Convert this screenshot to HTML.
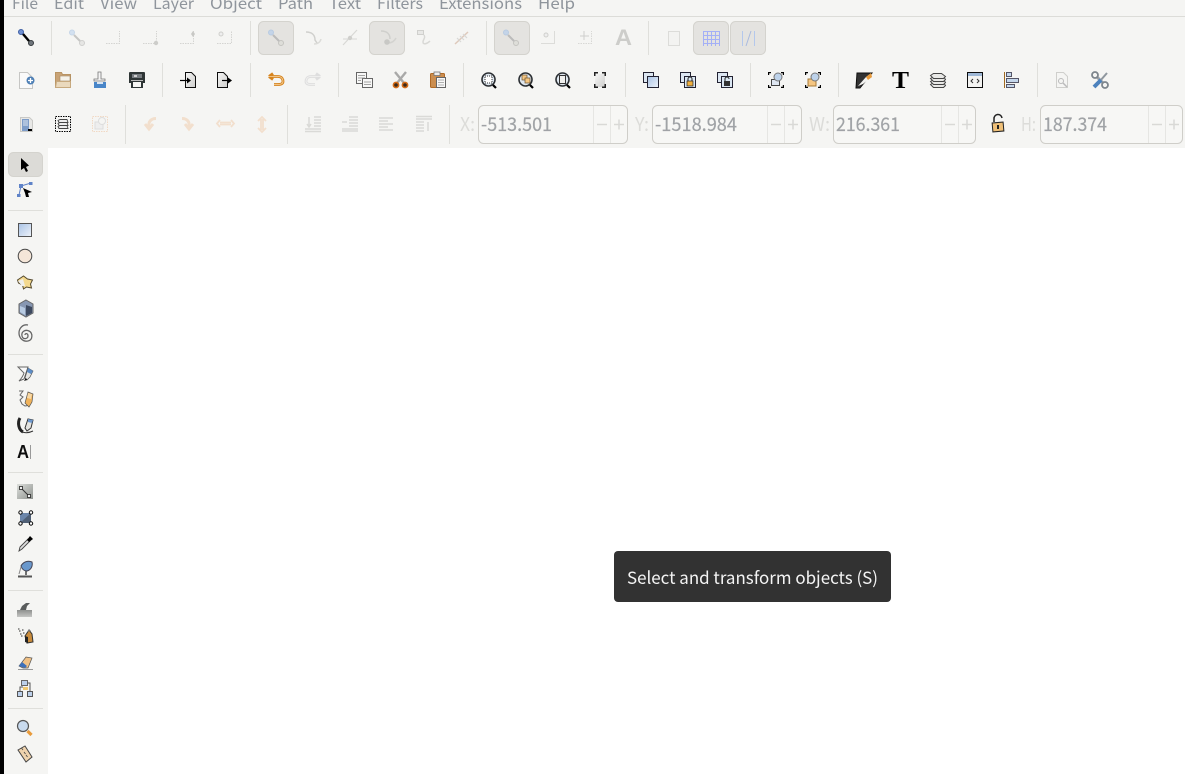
<!DOCTYPE html>
<html><head><meta charset="utf-8"><title>Inkscape</title>
<style>
html,body{margin:0;padding:0;background:#fff;width:1185px;height:774px;overflow:hidden}
svg{display:block;position:absolute;left:0;top:0}
text{font-family:"Noto Sans CJK JP","Liberation Sans",sans-serif}
</style></head><body>
<svg width="1185" height="774" viewBox="0 0 1185 774" xmlns="http://www.w3.org/2000/svg">
<defs>
<linearGradient id="bl" x1="0" y1="0" x2="1" y2="1"><stop offset="0" stop-color="#a9c3e6"/><stop offset="1" stop-color="#eef3f9"/></linearGradient>
<linearGradient id="gr" x1="0" y1="0" x2="1" y2="1"><stop offset="0" stop-color="#f5f5f4"/><stop offset="1" stop-color="#cfcfcd"/></linearGradient>
<linearGradient id="dg" x1="0" y1="0" x2="1" y2="1"><stop offset="0" stop-color="#dcdedb"/><stop offset="1" stop-color="#8f938f"/></linearGradient>
<linearGradient id="cal" x1="0" y1="0" x2="0" y2="1"><stop offset="0" stop-color="#8e908e"/><stop offset="1" stop-color="#c5c6c4"/></linearGradient>
<filter id="s" x="-5%" y="-5%" width="110%" height="110%"><feGaussianBlur stdDeviation=".25"/></filter>
</defs>
<rect width="1185" height="774" fill="#fff"/>
<rect x="4" width="1181" height="148" fill="#f5f5f3"/>
<rect x="4" width="44" height="774" fill="#f5f5f3"/>
<rect width="4" height="774" fill="#000"/>
<rect x="4" y="16" width="1181" height="1" fill="#dcdcd8"/>
<!-- menu -->
<g font-size="16" fill="#8f959c">
<text x="12" y="9" textLength="26" lengthAdjust="spacingAndGlyphs">File</text>
<text x="54" y="9" textLength="30" lengthAdjust="spacingAndGlyphs">Edit</text>
<text x="100" y="9" textLength="37" lengthAdjust="spacingAndGlyphs">View</text>
<text x="153" y="9" textLength="41" lengthAdjust="spacingAndGlyphs">Layer</text>
<text x="210" y="9" textLength="52" lengthAdjust="spacingAndGlyphs">Object</text>
<text x="278" y="9" textLength="35" lengthAdjust="spacingAndGlyphs">Path</text>
<text x="329" y="9" textLength="32" lengthAdjust="spacingAndGlyphs">Text</text>
<text x="377" y="9" textLength="46" lengthAdjust="spacingAndGlyphs">Filters</text>
<text x="439" y="9" textLength="83" lengthAdjust="spacingAndGlyphs">Extensions</text>
<text x="538" y="9" textLength="37" lengthAdjust="spacingAndGlyphs">Help</text>
</g>
<!-- separators -->
<g fill="#dfdfdb">
<rect x="51" y="21" width="1" height="34"/><rect x="250" y="21" width="1" height="34"/><rect x="486" y="21" width="1" height="34"/><rect x="648" y="21" width="1" height="34"/>
<rect x="162" y="63" width="1" height="34"/><rect x="250" y="63" width="1" height="34"/><rect x="338" y="63" width="1" height="34"/><rect x="463" y="63" width="1" height="34"/><rect x="625" y="63" width="1" height="34"/><rect x="750" y="63" width="1" height="34"/><rect x="838" y="63" width="1" height="34"/><rect x="1037" y="63" width="1" height="34"/>
<rect x="125" y="105" width="1" height="39"/><rect x="287" y="105" width="1" height="39"/><rect x="449" y="105" width="1" height="39"/>
<rect x="8" y="210" width="35" height="1"/><rect x="8" y="354" width="35" height="1"/><rect x="8" y="472" width="35" height="1"/><rect x="8" y="590" width="35" height="1"/><rect x="8" y="708" width="35" height="1"/>
</g>
<!-- pressed buttons -->
<g fill="#e4e3e0" stroke="#d4d3ce">
<rect x="258.5" y="21.5" width="35" height="33" rx="5"/>
<rect x="369.5" y="21.5" width="35" height="33" rx="5"/>
<rect x="494.5" y="21.5" width="35" height="33" rx="5"/>
<rect x="693.5" y="21.5" width="35" height="33" rx="5"/>
<rect x="730.5" y="21.5" width="35" height="33" rx="5"/>
<rect x="8.5" y="152.5" width="34" height="24" rx="5" fill="#dcdbd7"/>
</g>
<g filter="url(#s)">
<!-- ROW 1 -->
<circle cx="21" cy="32" r="2.5" fill="#6f90d2" stroke="#3e5fa5"/><circle cx="31" cy="43" r="2.5" fill="#70767c" stroke="#33373b"/><path d="M23 34L29 41" stroke="#000" stroke-width="2.4"/>
<circle cx="72" cy="32.500" r="2.500" fill="#d3e1f0" stroke="#c6d6e8"/><circle cx="82" cy="43" r="2.500" fill="#e6e6e4" stroke="#cfcfcd"/><path d="M74 35L80 41" stroke="#c6c6c4" stroke-width="2"/>
<path d="M106 43.500H119.500V31" fill="none" stroke="#d4d4d1" stroke-dasharray="1.500 1"/>
<path d="M143 43.500H156.500V31" fill="none" stroke="#d4d4d1" stroke-dasharray="1.500 1"/><circle cx="156" cy="43" r="2.200" fill="#cdcdca"/>
<path d="M180 43.500H193.500V31" fill="none" stroke="#d4d4d1" stroke-dasharray="1.500 1"/><path d="M193 31l2 3-2 3-2-3z" fill="#c8c8c5"/>
<path d="M217 43.500H231.500V31" fill="none" stroke="#d4d4d1" stroke-dasharray="1.500 1"/><circle cx="221" cy="34" r="2" fill="#eee" stroke="#cfcfcc"/>
<circle cx="271" cy="32.500" r="2.500" fill="#c4d4e8" stroke="#b8cbe2"/><circle cx="281" cy="43" r="2.500" fill="#deded9" stroke="#c4c4c0"/><path d="M273 35L279 41" stroke="#bbb" stroke-width="2"/>
<path d="M306 32c6 0 9 3 9 8l2 3" fill="none" stroke="#d0d0cd" stroke-width="1.500"/><path d="M314 44c3 0 6-1 7-5" fill="none" stroke="#dcdcd9" stroke-width="1.500"/>
<path d="M343 45L357 30" stroke="#d8d8d5" stroke-width="1.200"/><path d="M343 39h14" stroke="#d8d8d5"/><circle cx="350" cy="38" r="2.200" fill="#cfcfcc"/>
<path d="M381 31c6 0 9 3 9 8" fill="none" stroke="#cfcfcc" stroke-width="1.500"/><path d="M388 43c3 0 6-1 8-5" fill="none" stroke="#d3d3d0" stroke-width="1.500"/><circle cx="387" cy="42" r="2.800" fill="#c8c8c5"/>
<rect x="417.500" y="30.500" width="6" height="4" fill="#e8e8e6" stroke="#d0d0cd"/><path d="M424 35c2 3-1 4-1 7s4 2 7-1" fill="none" stroke="#d8d8d5" stroke-width="1.500"/>
<path d="M455 44L468 32" stroke="#dec9bb" stroke-width="1.500"/><path d="M457 38l4 4M463 34l4 4M460 36l4 4" stroke="#d8d8d5" stroke-width="1.200"/>
<circle cx="506" cy="32.500" r="2.500" fill="#c4d4e8" stroke="#b8cbe2"/><circle cx="516" cy="43" r="2.500" fill="#deded9" stroke="#c4c4c0"/><path d="M508 35L514 41" stroke="#bbb" stroke-width="2"/>
<path d="M541 43.500H554.500V31" fill="none" stroke="#dcdcd9"/><circle cx="546" cy="35" r="2" fill="#eee" stroke="#cfcfcc"/>
<path d="M578 43.500H591.500V31" fill="none" stroke="#d8d8d5" stroke-dasharray="1.500 1"/><path d="M580 36h9M584 31v9" stroke="#cfcfcc"/>
<text x="615" y="45" style="font-family:'Liberation Sans',sans-serif" font-size="22" font-weight="bold" fill="#cdcdca" textLength="17" lengthAdjust="spacingAndGlyphs">A</text>
<rect x="668.500" y="31.500" width="11" height="14" fill="#f3f3f1" stroke="#dcdcd9"/>
<path d="M703.500 31v15M707.500 31v15M711.500 31v15M715.500 31v15M719.500 31v15M703 31.500h17M703 35.500h17M703 39.500h17M703 43.500h17" stroke="#a4b0f6" fill="none"/>
<path d="M742.500 31v15M754.500 31v15" stroke="#b4c8ec" fill="none"/><path d="M746 46l5-15" stroke="#a9bade" fill="none"/>
<!-- ROW 2 -->
<path d="M19.500 72.500h8l5 5v11h-13z" fill="#fafafa" stroke="#c6c6c4"/><circle cx="30.500" cy="80.500" r="4" fill="#4e7fb5"/><path d="M28 80.500h5M30.500 78v5" stroke="#fff" stroke-width="1.300"/>
<path d="M55.500 72.500h6l1 2h8v13h-15z" fill="#c9a376" stroke="#b99463"/><rect x="60" y="76" width="10" height="5" fill="#f5f2ea" stroke="#a58a66" stroke-width=".6"/><path d="M55.500 87.500l1-6h14v6z" fill="#ead9bd" stroke="#c7a97e"/>
<path d="M98 72h3v7h4v2H94v-2h4z" fill="#f4f4f4" stroke="#777" stroke-width=".8"/><rect x="94" y="82" width="12" height="6" fill="#4a86c8"/><rect x="97" y="82" width="6" height="2" fill="#d9e6f4"/>
<path d="M130 72h14q1 0 1 1v10h-2v5h-12v-5h-2v-10q0-1 1-1z" fill="#2f3436"/><rect x="132" y="74" width="10" height="4" fill="#777c80"/><rect x="134" y="75" width="3" height="2" fill="#d0d0d0"/><rect x="131" y="80" width="12" height="1" fill="#bbb"/><rect x="133" y="82" width="8" height="5" fill="#f6f6f4"/>
<path d="M185.500 72.500h6l4 4v11h-10z" fill="url(#gr)" stroke="#111"/><path d="M180 80.500h9" stroke="#000" stroke-width="1.200"/><path d="M187 77.500l4 3-4 3z" fill="#000"/>
<path d="M217.500 72.500h6l4 4v11h-10z" fill="url(#gr)" stroke="#111"/><path d="M222 80.500h8" stroke="#000" stroke-width="1.200"/><path d="M228 77.500l4 3-4 3z" fill="#000"/>
<path d="M269 76.500h9c4 0 5 3 5 5s-2 3-5 3h-4M269 76.500l4-3M269 76.500l4 3" fill="none" stroke="#d6831c" stroke-width="2.800"/>
<path d="M269 76.500h9c4 0 5 3 5 5s-2 3-5 3h-4" fill="none" stroke="#f7d7a6" stroke-width=".8"/>
<path d="M320 76.500h-9c-4 0-5 3-5 5s2 3 5 3h4M320 76.500l-4-3M320 76.500l-4 3" fill="none" stroke="#dedede" stroke-width="2.800"/>
<path d="M320 76.500h-9c-4 0-5 3-5 5s2 3 5 3h4" fill="none" stroke="#f3f3f2" stroke-width=".8"/>
<rect x="356.500" y="72.500" width="10" height="11" fill="#f8f8f7" stroke="#666"/><rect x="362.500" y="78.500" width="10" height="9" fill="#f8f8f7" stroke="#666"/><path d="M358 75.500h7M358 78h7M358 80.500h3M364 82h7M364 84.500h7" stroke="#888" stroke-width=".8"/>
<path d="M395 72l9 11M406 72l-9 11" stroke="#a9a9a8" stroke-width="2.400"/><circle cx="396" cy="85" r="2.600" fill="#3a2a1a" stroke="#d46b12" stroke-width="1.600"/><circle cx="405" cy="85" r="2.600" fill="#3a2a1a" stroke="#d46b12" stroke-width="1.600"/>
<rect x="430.500" y="73.500" width="14" height="14" rx="1" fill="#cc8e50" stroke="#b06a28"/><rect x="434" y="72" width="6" height="3.500" fill="#eee" stroke="#777" stroke-width=".8"/><rect x="436.500" y="77.500" width="9" height="10" fill="#f8f8f7" stroke="#666"/><path d="M438 80h6M438 82.500h6M438 85h6" stroke="#999" stroke-width=".8"/>
<g fill="#dfe7ef" stroke="#2b2f33" stroke-width="1.600">
<circle cx="488.500" cy="79.500" r="6.500"/><circle cx="525.500" cy="79.500" r="6.500"/><circle cx="562.500" cy="79.500" r="6.500"/>
</g>
<g stroke="#000" stroke-width="2.200"><path d="M493 85l3 3M530 85l3 3M567 85l3 3"/></g>
<rect x="485" y="76" width="7" height="7" fill="#fff" stroke="#333" stroke-dasharray="1 1"/>
<rect x="522" y="75" width="5" height="5" fill="#f5c682" stroke="#6a5230" stroke-width=".7"/><rect x="525" y="78" width="5" height="5" fill="#f5c682" stroke="#6a5230" stroke-width=".7"/>
<rect x="559.500" y="75.500" width="6" height="8" fill="#f0f0ee" stroke="#333"/>
<rect x="595" y="74" width="10" height="13" fill="url(#gr)"/><path d="M594 72h4v1.500h-2.500V76H594zM606 72h-4v1.500h2.500V76H606zM594 88h4v-1.500h-2.500V84H594zM606 88h-4v-1.500h2.500V84H606z" fill="#222"/>
<rect x="643.500" y="72.500" width="10" height="10" fill="#dde7f2" stroke="#223"/><rect x="647.500" y="76.500" width="11" height="11" fill="url(#bl)" stroke="#223"/>
<rect x="680.500" y="72.500" width="10" height="10" fill="#dde7f2" stroke="#223"/><rect x="684.500" y="76.500" width="11" height="11" fill="#dbe7f3" stroke="#223"/><rect x="687" y="81" width="6" height="5" fill="#f0b040" stroke="#222" stroke-width=".7"/><path d="M688 81v-2a2 2 0 014 0v2" fill="none" stroke="#222"/>
<rect x="717.500" y="72.500" width="10" height="10" fill="#dde7f2" stroke="#223"/><rect x="721.500" y="76.500" width="11" height="11" fill="#dbe7f3" stroke="#223"/><rect x="724" y="81" width="6" height="5" fill="#333"/><path d="M725 81v-2a2 2 0 014 0" fill="none" stroke="#222"/>
<path d="M768 72h3v1.200h-1.800V75H768zM784 72h-3v1.200h1.800V75H784zM768 88h3v-1.200h-1.800V85H768zM784 88h-3v-1.200h1.800V85H784z" fill="#000"/><rect x="771.500" y="79.500" width="8" height="6" fill="#dfe7f2" stroke="#444"/><circle cx="778" cy="77" r="4" fill="#bdd2ea" stroke="#777"/>
<path d="M805 72h3v1.200h-1.800V75H805zM821 72h-3v1.200h1.800V75H821zM805 88h3v-1.200h-1.800V85H805zM821 88h-3v-1.200h1.800V85H821z" fill="#000"/><rect x="808" y="79" width="8" height="7" fill="#f5c682" stroke="#a87a38"/><circle cx="815" cy="77" r="4" fill="#bdd2ea" stroke="#777"/>
<path d="M857 73h15L860 88h-4z" fill="#333" stroke="#111"/><path d="M858 86l8-9 4-3-1 5-6 5z" fill="#f3f3f1"/><path d="M866 77l5-4 1 4-4 3z" fill="#e89a3a"/>
<text x="892" y="88" style="font-family:'Liberation Serif',serif" font-size="24" font-weight="bold" fill="#000" textLength="17" lengthAdjust="spacingAndGlyphs">T</text>
<g fill="#e8e8e6" stroke="#444"><path d="M930.500 84.500l3-2h10l2 3-2 2h-10z"/><path d="M930.500 81.500l3-2h10l2 3-2 2h-10z"/><path d="M930.500 78.500l3-2h10l2 3-2 2h-10z"/><path d="M930.500 75.500l3-2h8l4 3-2 2h-10z"/></g>
<rect x="967.500" y="72.500" width="15" height="15" fill="#f3f3f1" stroke="#111"/><rect x="968" y="73" width="14" height="3" fill="#9fb8d6"/><path d="M973 79l-2 2 2 2M977 79l2 2-2 2" stroke="#333" fill="none"/>
<rect x="1004" y="72" width="1" height="16" fill="#a06a20"/><rect x="1006.500" y="72.500" width="5" height="4" fill="#c5d7ec" stroke="#556"/><rect x="1006.500" y="78.500" width="12" height="4" fill="#c5d7ec" stroke="#556"/><rect x="1006.500" y="84.500" width="8" height="3" fill="#c5d7ec" stroke="#556"/>
<path d="M1056.500 72.500h7l4 4v11h-11z" fill="#f5f5f3" stroke="#cfcfcc"/><circle cx="1061" cy="81" r="2.500" fill="none" stroke="#bbb"/><path d="M1063 83l4 4" stroke="#bbb" stroke-width="1.500"/>
<path d="M1095 75l11 11" stroke="#9aa0a6" stroke-width="3"/><circle cx="1095" cy="75" r="3" fill="#f5f5f3" stroke="#7d858c" stroke-width="1.800"/><circle cx="1105" cy="85" r="3" fill="#f5f5f3" stroke="#7d858c" stroke-width="1.800"/><path d="M1100 81l7-8" stroke="#8f979e" stroke-width="2"/><path d="M1094 87l7-7" stroke="#4d82bd" stroke-width="4"/>
<!-- ROW 3 -->
<path d="M20.500 117.500h9l3 3v11h-12z" fill="#e8e8e6" stroke="#c9c9c6"/><rect x="22" y="119" width="7" height="12" fill="#7e9dc8"/><path d="M23 121h5M23 123h5M23 125h5" stroke="#dfe7f2"/><path d="M28 130h4" stroke="#000" stroke-width="2"/>
<rect x="55.500" y="116.500" width="15" height="15" fill="none" stroke="#000" stroke-dasharray="1.500 1"/><g fill="#eee" stroke="#444" stroke-width=".9"><path d="M58 126.500l2-1h7l1 3h-9z"/><path d="M58 123.500l2-1h7l1 3h-9z"/><path d="M58 120.500l2-1h7l1 3h-9z"/></g>
<rect x="92.500" y="116.500" width="15" height="15" fill="none" stroke="#f1d9c4" stroke-dasharray="1.500 1"/><rect x="95" y="122" width="8" height="7" fill="#eee" stroke="#ddd"/><circle cx="102" cy="121" r="3.500" fill="#f5f5f3" stroke="#ddd"/>
<g fill="none" stroke="#f2dfcd" stroke-width="3">
<path d="M156 118.500c-5 0-8 3-7 9M145 124l4 5 4-5"/>
<path d="M182 118.500c5 0 8 3 7 9M193 124l-4 5-4-5"/>
<path d="M220 122.500h11M220 124.500h11M220 120l-3 3.500 3 3.500M231 120l3 3.500-3 3.500" stroke-width="1.800"/>
<path d="M261 119v11M263 119v11M258 121l4-4 4 4M258 128l4 4 4-4" stroke-width="1.800"/>
</g>
<g fill="none" stroke="#dadad7" stroke-width="1.500">
<path d="M305 131.500h16M305 129h16"/><path d="M314 117h7M314 120h7M314 123h7M314 126h7M309 117v9M307 124l2 3 2-3"/>
<path d="M342 131h16M342 129h16"/><path d="M349 117h9M349 120h9M349 123h9M349 126h9M342 122h5"/>
<path d="M379 118h14M379 121h9M379 124h14M379 127h9M379 130h14"/>
<path d="M416 116.500h16M416 119h16"/><path d="M416 122h8M416 125h8M416 128h8M416 131h8M428 131v-9"/>
</g>
<rect x="992.500" y="122.500" width="11" height="9" fill="#efc078" stroke="#222" transform="rotate(-5 998 127)"/><path d="M994 122v-3a4 4 0 018-1" fill="none" stroke="#222" stroke-width="1.500"/><rect x="997" y="125" width="2" height="4" fill="#222"/>
<!-- LEFT TOOLBAR -->
<path d="M21 158l0 12 3-2 2 4 2-1-2-4 3-1.500z" fill="#000"/>
<path d="M21 186l-2 9M21 186l10-3" stroke="#5f83c8" fill="none"/><rect x="19" y="184" width="4" height="4" fill="#5f83c8"/><rect x="29" y="182" width="3.500" height="3" fill="#5f83c8"/><rect x="17" y="194" width="3.500" height="3" fill="#5f83c8"/><path d="M23 188l9 4-4 1 1 4-3 0-1-4z" fill="#000"/>
<rect x="18.500" y="223.500" width="13" height="13" fill="url(#bl)" stroke="#555"/>
<circle cx="25" cy="256" r="6.800" fill="#f5e6d8" stroke="#444"/>
<path d="M17.500 280l6-4 4 3 5 1-2 4 1 4-5-1-3 2-1-4-4-2z" fill="#f4d98e" stroke="#554a2e"/><path d="M18 281l4 5 3 0-2-7z" fill="#efefec"/>
<path d="M26 300l7 4v9l-7 4-7-4v-9z" fill="#8797b2" stroke="#666"/><path d="M26 305l6 2v6l-6 3z" fill="#3d4a5e"/><path d="M20 306l5 2v7l-5-3z" fill="#b8cbe2"/>
<path d="M25 335c0-2 3-2 3 1s-5 4-6 0 3-7 7-5 4 9-1 10-9-3-9-8 4-9 9-8" fill="none" stroke="#666" stroke-width="1.300"/>
<path d="M18 367h10l-4 12-5 2c3-3 4-5 5-8z" fill="#fafafa" stroke="#666"/><path d="M25 378l3-10 5 3-3 6-3 3z" fill="#e7e7e5" stroke="#555" stroke-width=".7"/><path d="M28 368l5 3-2 3-4-2z" fill="#5b8cc6"/><path d="M24 381l2-3 1 2z" fill="#000"/>
<path d="M19 391h4l-3 4 3 2-3 3 2 4 3 2c2 0 3-1 5-2" fill="none" stroke="#666"/><path d="M25 403l3-11 5 2-1 8-3 5z" fill="#f0b25a" stroke="#555" stroke-width=".7"/><path d="M28 393l4 1-1 5-4-1z" fill="#f8d9a6"/>
<path d="M20 418c-3 5-1 12 3 14" fill="none" stroke="#222" stroke-width="3"/><path d="M25 428l3-9 5 1-2 8-4 3z" fill="#e4e4e1" stroke="#333"/><path d="M28 419l5 1-1 3-4-1z" fill="#6c97cc"/><path d="M22 432c3 1 7 1 11-1" stroke="#333" fill="none"/>
<text x="17" y="458" style="font-family:'Liberation Sans',sans-serif" font-size="18" font-weight="bold" fill="#111" textLength="12" lengthAdjust="spacingAndGlyphs">A</text><path d="M30.500 445v14" stroke="#999"/>
<rect x="17" y="484" width="16" height="15" fill="url(#dg)"/><path d="M21 488L29 496" stroke="#333"/><rect x="19.500" y="486.500" width="3" height="3" fill="#eee" stroke="#222" stroke-width=".8"/><rect x="27.500" y="494.500" width="3" height="3" fill="#eee" stroke="#222" stroke-width=".8"/>
<path d="M20 513l11 0-1 10-10 0z" fill="#6c86aa"/><path d="M20 523l11-10v10z" fill="#4f5f74"/><g fill="#fff" stroke="#111"><circle cx="20.500" cy="512.500" r="1.700"/><circle cx="31" cy="512.500" r="1.700"/><circle cx="20.500" cy="523.500" r="1.700"/><circle cx="31" cy="523.500" r="1.700"/></g>
<path d="M20 547l8-8 2 2-8 8-3 2z" fill="#ddd" stroke="#444" stroke-width=".9"/><path d="M27 540l3-4 3 3-4 3z" fill="#000"/>
<path d="M21 566c2-4 7-6 11-4 1 4-1 8-5 9-3 0-5-2-6-5z" fill="#6a98cc" stroke="#445"/><path d="M26 571v4" stroke="#444" stroke-width="1.500"/><path d="M18 576.500h14" stroke="#555" stroke-width="2"/><path d="M21 567l-2 7" stroke="#888"/>
<rect x="17" y="610" width="15" height="7" fill="url(#cal)"/><path d="M20 610l2-4 4-3h4l-3 3-1 4z" fill="#5a5d5d"/>
<path d="M19 631h1.500M22 630h1.500M20 634h1.500M23 633h1.500M18 629h1.500M21 636h1.500" stroke="#333"/><path d="M25 636l4-6 3 4 1 8-6 1z" fill="#c98b3a" stroke="#333"/><path d="M25 636l3 1v6l-3-1z" fill="#222"/><path d="M27 632l2-3 2 2z" fill="#777"/>
<path d="M23 668l-4-2 7-9 6 1-4 10z" fill="#f0c084" stroke="#555" stroke-width=".7"/><path d="M19 666l3-4 5 4-2 2z" fill="#3d70bb"/><path d="M18 669.500h15" stroke="#999"/>
<rect x="21.500" y="680.500" width="6" height="5" fill="#bcd0ea" stroke="#666"/><rect x="17.500" y="691.500" width="5" height="5" fill="#bcd0ea" stroke="#555"/><rect x="27.500" y="691.500" width="5" height="5" fill="#bcd0ea" stroke="#555"/><rect x="23" y="687" width="5" height="3" fill="#f0c870"/><path d="M20 691v-4h3M27.500 683h2.500v8" fill="none" stroke="#555"/>
<circle cx="23" cy="726" r="5.500" fill="#c9dbef" stroke="#555" stroke-width="1.200"/><path d="M27.500 731l4 4" stroke="#e89a3a" stroke-width="3.200"/>
<path d="M18 750l7-4 7 11-6 5z" fill="#efd3ad" stroke="#444"/><path d="M21.500 748l1.500 2M24 752l1.500 2M26 755l1.500 2" stroke="#444" stroke-width=".8"/>
</g>
<!-- inputs -->
<g fill="#f7f7f5" stroke="#cfcec9">
<rect x="478.500" y="105.500" width="149" height="38" rx="5"/>
<rect x="652.500" y="105.500" width="149" height="38" rx="5"/>
<rect x="833.500" y="105.500" width="142" height="38" rx="5"/>
<rect x="1040.500" y="105.500" width="142" height="38" rx="5"/>
</g>
<g fill="#e6e6e3">
<rect x="593" y="106" width="1" height="37"/><rect x="610" y="106" width="1" height="37"/>
<rect x="767" y="106" width="1" height="37"/><rect x="784" y="106" width="1" height="37"/>
<rect x="941" y="106" width="1" height="37"/><rect x="958" y="106" width="1" height="37"/>
<rect x="1148" y="106" width="1" height="37"/><rect x="1165" y="106" width="1" height="37"/>
</g>
<g stroke="#d9d9d6" stroke-width="1.500" fill="none">
<path d="M597 124.500h10M614 124.500h10M619 119.500v10"/>
<path d="M771 124.500h10M788 124.500h10M793 119.500v10"/>
<path d="M945 124.500h10M962 124.500h10M967 119.500v10"/>
<path d="M1152 124.500h10M1169 124.500h10M1174 119.500v10"/>
</g>
<g font-size="19" fill="#dcdcd9">
<text x="460" y="131" textLength="15" lengthAdjust="spacingAndGlyphs">X:</text>
<text x="635" y="131" textLength="14" lengthAdjust="spacingAndGlyphs">Y:</text>
<text x="809" y="131" textLength="21" lengthAdjust="spacingAndGlyphs">W:</text>
<text x="1021" y="131" textLength="15" lengthAdjust="spacingAndGlyphs">H:</text>
</g>
<g font-size="19" fill="#a0a3a6" stroke="#a0a3a6" stroke-width=".2">
<text x="481" y="131" textLength="71" lengthAdjust="spacingAndGlyphs">-513.501</text>
<text x="655" y="131" textLength="82" lengthAdjust="spacingAndGlyphs">-1518.984</text>
<text x="836" y="131" textLength="64" lengthAdjust="spacingAndGlyphs">216.361</text>
<text x="1043" y="131" textLength="64" lengthAdjust="spacingAndGlyphs">187.374</text>
</g>
<!-- tooltip -->
<rect x="614" y="551" width="277" height="51" rx="4" fill="#323232"/>
<text x="627" y="584" font-size="17" fill="#f4f4f4" textLength="251" lengthAdjust="spacingAndGlyphs">Select and transform objects (S)</text>
</svg>
</body></html>
